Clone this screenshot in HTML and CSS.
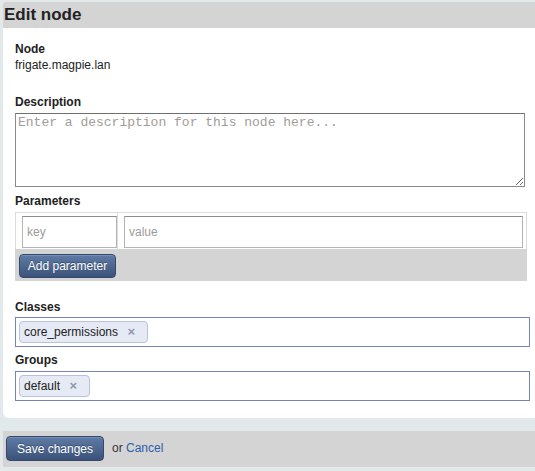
FILE: index.html
```html
<!DOCTYPE html>
<html>
<head>
<meta charset="utf-8">
<title>Edit node</title>
<link rel="stylesheet" href="styles.css">
</head>
<body>
<div class="page">
  <h1 class="title">Edit node</h1>
  <div class="panel">
    <div class="field">
      <div class="label">Node</div>
      <div class="value">frigate.magpie.lan</div>
    </div>
    <div class="field desc">
      <div class="label">Description</div>
      <textarea class="textarea" placeholder="Enter a description for this node here..."></textarea>
    </div>
    <div class="field params-field">
      <div class="label">Parameters</div>
      <div class="params">
        <div class="params-row">
          <div class="cell-key"><input class="input key" placeholder="key"></div>
          <div class="cell-val"><input class="input val" placeholder="value"></div>
        </div>
        <div class="params-actions">
          <button class="btn btn-small">Add parameter</button>
        </div>
      </div>
    </div>
    <div class="field classes-field">
      <div class="label">Classes</div>
      <div class="tagbox">
        <span class="tag">core_permissions <span class="x">×</span></span>
      </div>
    </div>
    <div class="field groups-field">
      <div class="label">Groups</div>
      <div class="tagbox">
        <span class="tag">default <span class="x">×</span></span>
      </div>
    </div>
  </div>
  <div class="footer">
    <button class="btn btn-save">Save changes</button>
    <span class="or">or <a class="cancel" href="#">Cancel</a></span>
  </div>
</div>
</body>
</html>
```
FILE: styles.css
```css
html, body {
  margin: 0;
  padding: 0;
  background: #e2e9eb;
  overflow: hidden;
}
body {
  font-family: "Liberation Sans", Arial, sans-serif;
  font-size: 12px;
  color: #222;
}
.page {
  padding: 2px 0 0 3px;
  width: 540px;
}
.title {
  margin: 0;
  height: 26px;
  background: #d4d4d4;
  font-size: 17px;
  font-weight: bold;
  line-height: 26px;
  padding-left: 1px;
  color: #222;
  border-top-left-radius: 3px;
}
.panel {
  background: #fff;
  padding: 14px 0 17px 12px;
  border-bottom-left-radius: 6px;
}
.label {
  font-weight: bold;
  line-height: 15px;
  color: #222;
}
.value {
  line-height: 15px;
  margin-top: 1px;
}
.desc {
  margin-top: 22px;
}
.desc .label {
  margin-bottom: 3px;
}
.textarea {
  display: block;
  box-sizing: border-box;
  width: 510px;
  height: 74px;
  margin: 0;
  border: 1px solid #8a8a8a;
  border-top-color: #6f6f6f;
  padding: 1px 2px;
  font-family: "Liberation Mono", "Courier New", monospace;
  font-size: 13px;
  resize: both;
}
.textarea::placeholder {
  color: #a29c98;
}
.params-field {
  margin-top: 7px;
}
.params-field .label {
  margin-bottom: 3px;
}
.params {
  width: 512px;
}
.params-row {
  display: flex;
  border: 1px solid #dcdcdc;
  border-bottom: none;
  background: #fff;
}
.cell-key {
  width: 95px;
  padding: 3px 0 1px 6px;
  border-right: 1px solid #dcdcdc;
}
.cell-val {
  flex: 1;
  padding: 3px 2px 1px 6px;
}
.input {
  display: block;
  box-sizing: border-box;
  height: 32px;
  margin: 0;
  border: 1px solid #b4b4b4;
  border-top-color: #8c8c8c;
  padding: 0 4px;
  font-family: "Liberation Sans", Arial, sans-serif;
  font-size: 12px;
  background: #fff;
}
.input::placeholder {
  color: #9c9c9c;
}
.key {
  width: 95px;
}
.val {
  width: 399px;
}
.params-actions {
  background: #d4d4d4;
  padding: 5px 0 3px 4px;
}
.btn {
  font-family: "Liberation Sans", Arial, sans-serif;
  color: #fff;
  background: linear-gradient(#5f7ca6, #3b5279);
  border: 1px solid #34496b;
  border-radius: 4px;
  text-shadow: 0 -1px 0 rgba(0,0,0,0.3);
  box-shadow: inset 0 1px 0 rgba(255,255,255,0.15);
  cursor: pointer;
  margin: 0;
}
.btn-small {
  display: block;
  width: 97px;
  height: 24px;
  font-size: 12px;
  padding: 0;
}
.classes-field {
  margin-top: 19px;
}
.classes-field .label {
  margin-bottom: 2px;
}
.groups-field {
  margin-top: 6px;
}
.groups-field .label {
  margin-bottom: 3px;
}
.tagbox {
  box-sizing: border-box;
  width: 515px;
  height: 30px;
  border: 1px solid #7486b5;
  padding: 3px;
  display: flex;
  align-items: flex-start;
}
.tag {
  box-sizing: border-box;
  height: 22px;
  line-height: 20px;
  padding: 0 12px 0 4px;
  background: #e6eaf4;
  border: 1px solid #b9c2da;
  border-radius: 4px;
  color: #222;
  white-space: nowrap;
}
.tag .x {
  display: inline-block;
  margin-left: 6px;
  color: #8f97b0;
  font-weight: bold;
  font-size: 13px;
}
.footer {
  margin-top: 13px;
  height: 36px;
  background: #d4d4d4;
  padding: 5px 0 0 3px;
  box-sizing: border-box;
  display: flex;
  align-items: flex-start;
}
.btn-save {
  width: 98px;
  height: 25px;
  font-size: 12px;
  padding: 0;
}
.or {
  margin-left: 8px;
  line-height: 25px;
  color: #333;
}
.cancel {
  color: #2d5ea8;
  text-decoration: none;
}
```
